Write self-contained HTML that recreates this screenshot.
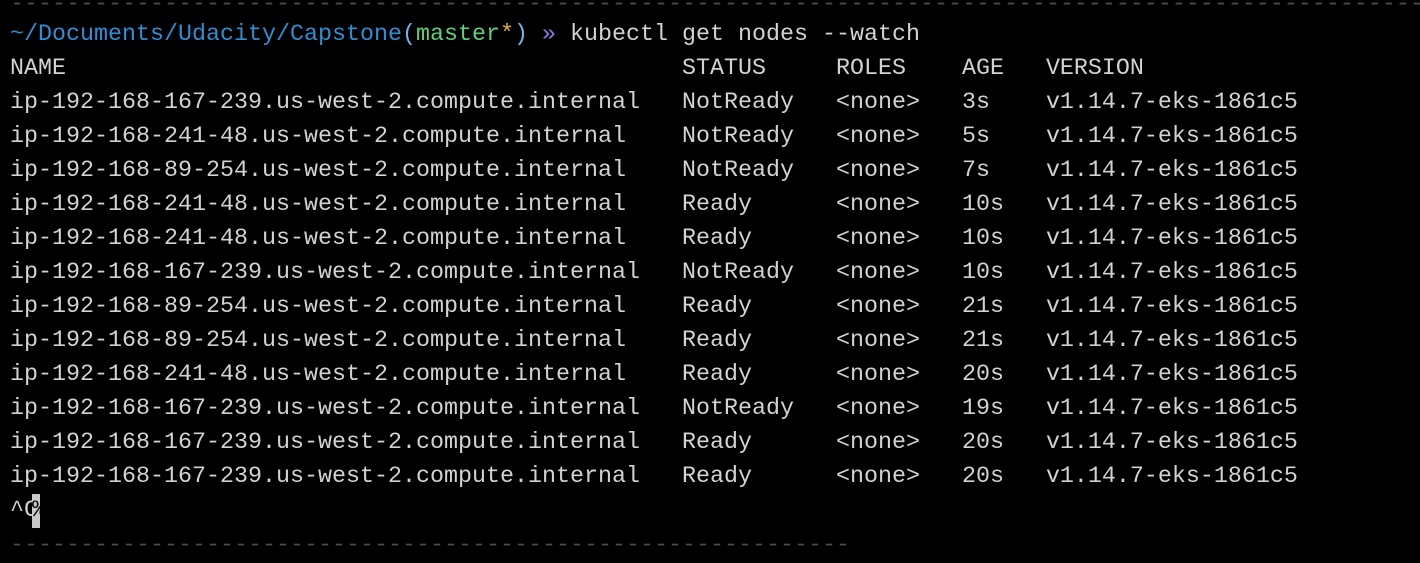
<!DOCTYPE html>
<html><head><meta charset="utf-8"><style>
html,body{margin:0;padding:0;background:#000;width:1420px;height:554px;overflow:hidden}
pre{position:absolute;left:10px;margin:0;font-family:"Liberation Mono",monospace;font-size:23.33px;line-height:34px;color:#d2d2d2;white-space:pre}
.d{color:#4a4a4a}
.b{color:#2c8fd6}.lb{color:#6cb4e8}.g{color:#5fd07a}.y{color:#f0b030}.p{color:#8a7cf0}
.cur{background:#c8c8c8;color:#000;display:inline-block;width:8px;overflow:hidden;vertical-align:top;margin-left:-6px}
</style></head><body>
<pre class="d" style="top:-12px;left:10px">------------------------------------------------------------------------------------------------------</pre>
<pre style="top:18px"><span class="b">~/Documents/Udacity/Capstone</span><span class="lb">(</span><span class="g">master</span><span class="y">*</span><span class="lb">)</span> <span class="p">»</span> kubectl get nodes --watch
NAME                                            STATUS     ROLES    AGE   VERSION
ip-192-168-167-239.us-west-2.compute.internal   NotReady   &lt;none&gt;   3s    v1.14.7-eks-1861c5
ip-192-168-241-48.us-west-2.compute.internal    NotReady   &lt;none&gt;   5s    v1.14.7-eks-1861c5
ip-192-168-89-254.us-west-2.compute.internal    NotReady   &lt;none&gt;   7s    v1.14.7-eks-1861c5
ip-192-168-241-48.us-west-2.compute.internal    Ready      &lt;none&gt;   10s   v1.14.7-eks-1861c5
ip-192-168-241-48.us-west-2.compute.internal    Ready      &lt;none&gt;   10s   v1.14.7-eks-1861c5
ip-192-168-167-239.us-west-2.compute.internal   NotReady   &lt;none&gt;   10s   v1.14.7-eks-1861c5
ip-192-168-89-254.us-west-2.compute.internal    Ready      &lt;none&gt;   21s   v1.14.7-eks-1861c5
ip-192-168-89-254.us-west-2.compute.internal    Ready      &lt;none&gt;   21s   v1.14.7-eks-1861c5
ip-192-168-241-48.us-west-2.compute.internal    Ready      &lt;none&gt;   20s   v1.14.7-eks-1861c5
ip-192-168-167-239.us-west-2.compute.internal   NotReady   &lt;none&gt;   19s   v1.14.7-eks-1861c5
ip-192-168-167-239.us-west-2.compute.internal   Ready      &lt;none&gt;   20s   v1.14.7-eks-1861c5
ip-192-168-167-239.us-west-2.compute.internal   Ready      &lt;none&gt;   20s   v1.14.7-eks-1861c5
^C<span class="cur">%</span></pre>
<pre class="d" style="top:529px">------------------------------------------------------------</pre>
</body></html>
